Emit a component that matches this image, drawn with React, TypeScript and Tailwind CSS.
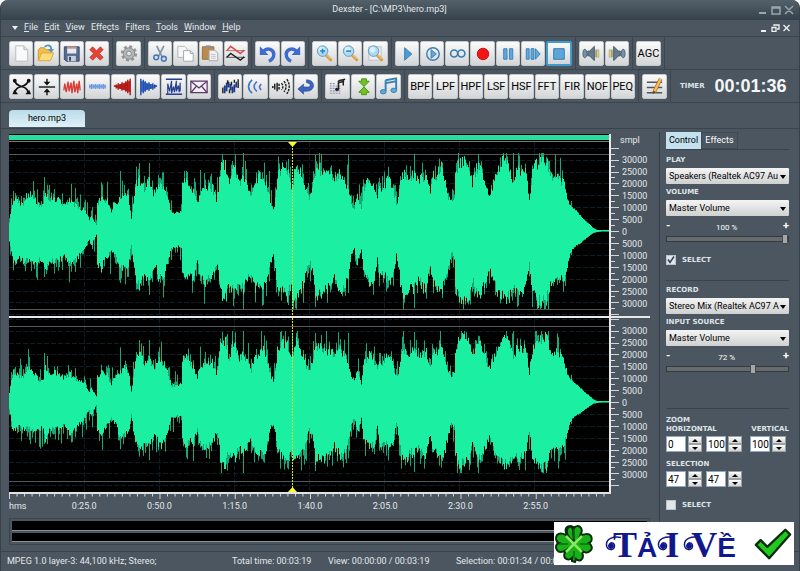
import { ReactNode } from "react";

const CAPS = "font-['DejaVu_Sans',sans-serif] text-[7px] leading-[9px] font-bold text-[#dfe4e8] uppercase";

/* x, upper level, lower level */
const ENVELOPE = [
	[0, 10, 10], [2, 24, 22], [4, 34, 34], [10, 30, 28], [14, 27, 32], [17, 38, 30], [22, 38, 33], [26, 32, 36],
	[30, 26, 31], [34, 27, 30], [36, 42, 44], [40, 33, 31], [45, 34, 32], [50, 32, 30], [55, 28, 27], [60, 32, 36],
	[65, 28, 33], [70, 24, 25], [75, 22, 20], [78, 16, 13], [80, 12, 9], [82, 17, 16], [85, 10, 8], [87, 6, 4],
	[88, 28, 34], [92, 35, 40], [95, 30, 30], [98, 32, 27], [102, 18, 20], [104, 30, 22], [107, 28, 26], [110, 34, 40],
	[115, 40, 38], [119, 36, 36], [122, 12, 14], [124, 30, 32], [127, 50, 50], [130, 54, 57], [135, 45, 46], [140, 52, 52],
	[143, 40, 42], [146, 40, 35], [149, 49, 48], [153, 45, 50], [156, 42, 42], [160, 28, 26], [162, 20, 18], [166, 19, 17],
	[171, 20, 16], [172, 20, 16], [173, 49, 42], [176, 52, 53], [180, 48, 45], [184, 40, 48], [188, 28, 30], [190, 38, 48],
	[195, 45, 54], [199, 47, 50], [203, 45, 50], [207, 32, 34], [209, 42, 40], [211, 64, 64], [216, 70, 71], [220, 50, 55],
	[223, 68, 62], [226, 64, 64], [230, 50, 52], [234, 55, 62], [238, 48, 48], [242, 38, 44], [246, 51, 60], [250, 58, 58],
	[254, 60, 61], [258, 46, 48], [261, 32, 32], [264, 24, 25], [266, 32, 36], [268, 60, 58], [274, 68, 62], [278, 64, 70],
	[282, 48, 55], [284, 54, 74], [287, 68, 66], [290, 62, 64], [294, 54, 56], [298, 38, 40], [300, 36, 33], [303, 44, 40],
	[306, 63, 66], [310, 65, 66], [315, 59, 64], [320, 60, 58], [325, 54, 50], [330, 60, 61], [335, 54, 58], [340, 42, 44],
	[342, 28, 26], [345, 25, 19], [348, 38, 34], [351, 26, 24], [352, 21, 19], [354, 45, 40], [360, 53, 53], [365, 46, 50],
	[368, 38, 26], [370, 44, 48], [375, 48, 46], [380, 56, 54], [384, 42, 48], [387, 29, 26], [389, 34, 36], [392, 55, 62],
	[396, 61, 69], [400, 52, 58], [405, 61, 60], [410, 52, 50], [414, 57, 62], [417, 56, 58], [421, 38, 38], [424, 58, 56],
	[428, 59, 58], [432, 68, 62], [436, 50, 54], [439, 34, 38], [442, 31, 23], [445, 34, 28], [446, 62, 62], [450, 71, 72],
	[455, 74, 70], [460, 67, 68], [463, 50, 50], [467, 65, 64], [471, 67, 66], [475, 56, 54], [478, 44, 46], [481, 38, 40],
	[485, 54, 56], [490, 65, 67], [495, 75, 71], [500, 69, 69], [504, 52, 60], [508, 63, 64], [513, 61, 64], [517, 60, 58],
	[520, 34, 34], [523, 60, 62], [527, 71, 73], [532, 74, 75], [537, 73, 72], [541, 60, 58], [546, 57, 54], [551, 53, 52],
	[555, 48, 48], [558, 32, 36], [561, 26, 22], [565, 22, 16], [570, 17, 13], [575, 11, 9], [580, 7, 5], [584, 3, 2],
	[588, 1, 1], [600, 1, 0],
];

const PEAKS = [
	[35, 54, 46], [111, 60, 52], [130, 68, 60], [140, 68, 64], [191, 61, 50], [213, 77, 66], [234, 78, 78], [279, 72, 74],
	[306, 76, 76], [339, 76, 62], [405, 77, 77], [497, 78, 70], [504, 78, 62], [532, 78, 77], [562, 30, 24],
];

const level = (x: number, side: number) => {
	let i = 1;
	while (i < ENVELOPE.length - 1 && ENVELOPE[i][0] < x) i++;
	const a = ENVELOPE[i - 1];
	const b = ENVELOPE[i];
	const t = (x - a[0]) / (b[0] - a[0]);
	return a[side] + (b[side] - a[side]) * t;
};

function buildWave(zero: number, gain: number, start: number) {
	let seed = start;
	const random = () => {
		seed = (seed * 16807) % 2147483647;
		return seed / 2147483647;
	};
	const side = (s: number) => {
		const body: number[] = [];
		let spikes = "";
		for (let x = 0; x < 600; x++) {
			const base = level(x, s) * gain;
			const tail = x > 556;
			const value = tail ? base * (0.94 + random() * 0.1) : base * (0.86 + random() * 0.2);
			const peak = PEAKS.find((p) => p[0] === x);
			let top = 0;
			if (peak) top = peak[s] * gain;
			else if (!tail && random() > 0.62) top = Math.min(78 * gain, value + 3 + random() * random() * 20);
			body.push(value);
			if (top > value) {
				const from = s === 1 ? zero - value : zero + value;
				const to = s === 1 ? zero - top : zero + top;
				spikes += `M${x + 0.5} ${from.toFixed(1)}V${to.toFixed(1)}`;
			}
		}
		return { body, spikes };
	};
	const up = side(1);
	const down = side(2);
	let d = `M0 ${zero}`;
	up.body.forEach((v, x) => (d += `V${(zero - v).toFixed(1)}H${x + 1}`));
	for (let x = 599; x >= 0; x--) d += `V${(zero + Math.max(down.body[x], 0.5)).toFixed(1)}H${x}`;
	return { body: d + "Z", spikes: up.spikes + down.spikes };
}

type ChannelProps = { zero: number; gain: number; seed: number; limits: number[]; first?: boolean };

function Channel({ zero, gain, seed, limits, first }: ChannelProps) {
	const wave = buildWave(zero, gain, seed);
	return (
		<svg viewBox="0 0 600 174" preserveAspectRatio="none" className="block h-[174px] w-full bg-black">
			<g stroke="#0f1d27" strokeDasharray="5 2">
				{[-7, -6, -5, -4, -3, -2, -1, 0, 1, 2, 3, 4, 5, 6, 7].map((n) => (
					<path key={n} d={`M0 ${Math.round(zero + n * 11.9)}.5H600`} />
				))}
				{[75, 150, 225, 300, 375, 450, 525].map((x) => (
					<path key={x} d={`M${x}.5 0V174`} />
				))}
			</g>
			{limits.map((y) => (
				<path key={y} d={`M0 ${y}.5H600`} stroke="#55595e" />
			))}
			<path d={wave.spikes} stroke="#18a777" />
			<path d={wave.body} fill="#1bf0a2" />
			<path d="M283.5 0V174" stroke="#d2e81c" strokeDasharray="2 1" />
			{first ? <path d="M279 0h9l-4.500 5z" fill="#ffff2a" /> : <path d="M279 174h9l-4.500-5z" fill="#ffff2a" />}
		</svg>
	);
}

const SAMPLES = [30000, 25000, 20000, 15000, 10000, 5000, 0, 5000, 10000, 15000, 20000, 25000, 30000];

function SampleTicks({ zero, top, height }: { zero: number; top: number; height: number }) {
	let d = "";
	for (let n = -14; n <= 14; n++) {
		const y = Math.round(top + zero + n * 5.95);
		if (y > top && y < height) d += `M0 ${y}.5h${n % 2 ? 4 : 8}`;
	}
	return (
		<svg width="10" height={height} className="block shrink-0 border-l-2 border-[#e8e8e8]">
			<path d={d} stroke="#d5d8da" />
		</svg>
	);
}

function Labels() {
	return (
		<>
			{SAMPLES.map((value, i) => (
				<li key={i} className="h-3">{value}</li>
			))}
		</>
	);
}

const magnifier = (
	<>
		<path d="M14 14l4.500 4.500" stroke="#d9983c" strokeWidth="3" strokeLinecap="round" />
		<path d="M14 13.500l4 4" stroke="#f6d48a" strokeLinecap="round" />
		<circle cx="10" cy="9.500" r="5.500" fill="#a9d9f3" stroke="#6b9ab6" />
		<circle cx="9" cy="8" r="3" fill="#d6f0fc" />
	</>
);

const turn = (
	<>
		<path d="M8 9.500c4-4.500 11-1.500 10.500 4 0 3-2 5-5 6.500" stroke="#3e6bd0" strokeWidth="3.500" />
		<path d="M4 4.500v9h9z" fill="#3e6bd0" />
	</>
);

const speaker = (
	<>
		<ellipse cx="5" cy="12" rx="2" ry="4.500" fill="#7791a8" stroke="#53697e" />
		<path d="M8 9.500h2l5-5v15l-5-5h-2z" fill="#66798a" stroke="#4d5e6c" />
		<path d="M16 8h4v8h-4z" fill="#8a8c80" />
		<path d="M17.500 8.500h2v7h-2z" fill="#ecd36a" />
	</>
);

const burst = (
	<path d="M3 11.500h2M5.500 10v4M7.500 8.500v7M9.500 9.500v5M11.500 7.500v9M13.500 9v6M15.500 6.500v11M17.500 5v14" strokeWidth="1.500" />
);

const ICONS: Record<string, ReactNode> = {
	New: <><path d="M6 4h8.500l4 4v12H6z" fill="#fafafa" stroke="#b9bcc0" /><path d="M14.500 4v4h4" fill="#dcdee0" stroke="#b9bcc0" /></>,
	Open: <><path d="M3.500 19V8l2-2h4l2 2h6v3" fill="#eebf4e" stroke="#d2992f" /><path d="M3.500 19.500l3.500-8h12.500l-3.500 8z" fill="#ffdc78" stroke="#dca63e" /><path d="M10 5c4-3 7-1 7 3" fill="none" stroke="#5795c4" strokeWidth="2" /><path d="M13.500 7.500h6.500l-3 3.500z" fill="#5795c4" /></>,
	Save: <><path d="M4.500 5h15.500v15H6.500l-2-2z" fill="#566b8f" stroke="#3b4d70" /><path d="M7.500 5h9.500v7H7.500z" fill="#e5ebf3" /><path d="M7.500 5h9.500v2H7.500z" fill="#d28c79" /><path d="M8 14.500h8.500v5.500H8z" fill="#c8cfda" /><path d="M9.500 15.500h2v4h-2z" fill="#33425e" /></>,
	Close: <path d="M5 8l3-3 4 4 4-4 3 3-4 4 4 4-3 3-4-4-4 4-3-3 4-4z" fill="#e64336" stroke="#bf2c22" strokeWidth=".7" />,
	Settings: <><circle cx="12.500" cy="12" r="7" stroke="#94989b" strokeWidth="3" strokeDasharray="3 2.500" /><circle cx="12.500" cy="12" r="6" fill="#b3b6b8" stroke="#85898c" /><circle cx="12.500" cy="12" r="2.500" fill="#e4e5e6" stroke="#85898c" /></>,
	Cut: <><path d="M8 4l6 12M15.500 4L10 15" stroke="#8495a3" strokeWidth="1.800" /><circle cx="7.500" cy="16" r="2.500" fill="none" stroke="#4378bd" strokeWidth="1.600" /><circle cx="15.500" cy="17.500" r="2.500" fill="none" stroke="#4378bd" strokeWidth="1.600" /></>,
	Copy: <><path d="M4 4.500h7l3 3v8.500H4z" fill="#f7f7f7" stroke="#b2b5b8" /><path d="M10 9h7l3 3v8H10z" fill="#fff" stroke="#a4a7aa" /><path d="M17 9v3h3" fill="none" stroke="#a4a7aa" /></>,
	Paste: <><path d="M3.500 5h12v13h-12z" fill="#b98b4e" stroke="#96703c" /><path d="M7 3.500h5v3H7z" fill="#8d9297" /><path d="M10.500 8.500h6l3 3v8h-9z" fill="#f1f1f1" stroke="#a4a7aa" /><path d="M12.500 13h5M12.500 15h5M12.500 17h5" stroke="#c4c6c9" /></>,
	"Invert phase": <g fill="none"><path d="M2 9h20" stroke="#c96b67" /><path d="M3 9l4-4.500 10 7.500 4-3.500" stroke="#d34b45" strokeWidth="1.500" /><path d="M2 16h20" stroke="#555" /><path d="M3 16l4-4 10 7 4-3.500" stroke="#222" strokeWidth="1.500" /></g>,
	Undo: turn,
	Redo: <g transform="matrix(-1 0 0 1 24 0)">{turn}</g>,
	"Zoom in": <>{magnifier}<path d="M7.500 9.500h5M10 7v5" stroke="#1684c8" strokeWidth="1.600" /></>,
	"Zoom out": <>{magnifier}<path d="M7.500 9.500h5" stroke="#1684c8" strokeWidth="1.600" /></>,
	"Zoom selection": <><path d="M5 5h13v14H5z" fill="#eceff1" stroke="#bcc1c5" />{magnifier}</>,
	Play: <path d="M9 6l7.500 6.500L9 19z" fill="#4d9bd1" stroke="#3781b6" />,
	"Play loop": <><circle cx="12.500" cy="12.500" r="6.500" fill="none" stroke="#3c7fb3" strokeWidth="1.500" /><path d="M10.500 8l5.500 4.500-5.500 4.500z" fill="#61a9db" stroke="#3c7fb3" /></>,
	Loop: <g fill="none" stroke="#397dae" strokeWidth="1.700"><circle cx="8.500" cy="12" r="3.700" /><circle cx="16" cy="12" r="3.700" /></g>,
	Record: <circle cx="12.500" cy="12.500" r="6" fill="#f31515" stroke="#c31313" />,
	Pause: <path d="M8 7h3.500v11H8zM14 7h3.500v11H14z" fill="#61a7da" stroke="#3d83b8" />,
	"Play from cursor": <path d="M5.500 7h3v11h-3zM10.500 7h3v11h-3zM15 7l5 5.500-5 5.500z" fill="#61a7da" stroke="#3d83b8" />,
	Stop: <path d="M7 7h11v11H7z" fill="#5ea6d8" stroke="#3179b0" />,
	"Volume down": speaker,
	"Volume up": <g transform="matrix(-1 0 0 1 24 0)">{speaker}</g>,
	"Fade cross": <><path d="M5 6c2 9 13 3 14 13M5 19c1-10 12-4 14-13" fill="none" stroke="#111" strokeWidth="1.800" /><circle cx="5" cy="6" r="2" fill="#111" /><circle cx="19.500" cy="6" r="2" fill="#111" /><path d="M2.500 20h6l-4-4.500zM22 20h-6l4-4.500z" fill="#111" /></>,
	Center: <><path d="M4 12.500h17M12.500 4v4M12.500 21v-4" stroke="#222" strokeWidth="1.600" /><path d="M9 7h7l-3.500 4zM9 18h7l-3.500-4z" fill="#111" /></>,
	Noise: <path d="M4 16l1-7 1.500 9 2-11 1 10 2-9 1 11 2-13 1 12 2-9 1 10 1.500-13 1 10" fill="none" stroke="#d93b35" strokeWidth="1.400" />,
	Flatten: <path d="M4 10v4M6 9.500v5M8 10v4M10 9.500v5M12 10v4M14 9.500v5M16 10v4M18 9.500v5M20 10v4M3.500 12h17" stroke="#6f9bdf" strokeWidth="1.600" />,
	"Fade in": <g stroke="#a91818"><path d="M3 12l17-6v12z" fill="#d52424" stroke="none" />{burst}<path d="M20 4v17" strokeWidth="1.500" /></g>,
	"Fade out": <g transform="matrix(-1 0 0 1 24 0)" stroke="#264da5"><path d="M3 12l17-6v12z" fill="#3f7de1" stroke="none" />{burst}<path d="M20 4v17" strokeWidth="1.500" /></g>,
	Normalize: <g fill="none" stroke="#263f92"><path d="M4 4.500h17M4 20h17" strokeWidth="1.500" /><path d="M6 20V9l2 8 2-11v13l2-7 1 6 2-12v11l2-6 1 7 1-10v9" strokeWidth="1.200" /></g>,
	Envelope: <g fill="none" stroke="#5d3b67" strokeWidth="1.300"><path d="M4 6.500h17v12H4z" fill="#f4eef6" /><path d="M4 6.500l8.500 7L21 6.500M4 18.500l6-7M21 18.500l-6-7" /></g>,
	Delay: <g fill="none"><path d="M6 11v8M8 8v9M10 7v6M12 9v7M14 12v7M16 10v8M18 7v6" stroke="#1d3a86" strokeWidth="1.800" /><path d="M4 13v6M9 5.500v4M13 7v4M16 5v3M20 4.500v9M11 15v4" stroke="#222" strokeWidth="1.500" /></g>,
	Echo: <g fill="none" stroke="#4775ca" strokeWidth="1.700"><path d="M8.500 5C3.500 9 3.500 15 8.500 19M13.500 7C9.500 10 9.500 14 13.500 17M18 9.500c-2.500 2-2.500 4 0 6" /></g>,
	Reverb: <g fill="none" stroke="#1d1d1d" strokeWidth="1.500"><path d="M6 9v6M8.500 8v9M4 11.500v2" /><path d="M10.500 9v7M13 8.500c2 2 2 5 0 7M15.500 6.500c3 3 3 8 0 11M18.500 4.500c3.500 4 3.500 11 0 15" strokeDasharray="2.500 1" /></g>,
	Reverse: <path d="M4 14.500l6-5v3h4c4 0 4-4-1-4.500V5c10 0 10 12 0 12h-3v3z" fill="#3b62bd" stroke="#2a4995" strokeWidth=".6" />,
	Tempo: <><path d="M4 9h5M4 11.500h11M4 14h11M4 16.500h11M4 19h11" stroke="#8b93b1" strokeWidth="1.200" strokeDasharray="2 1" /><path d="M13 6v9M13 6l7-1.500M18 5v6M13 8l6-1.500" stroke="#222" strokeWidth="1.600" /><ellipse cx="11.500" cy="15" rx="2" ry="1.600" fill="#222" /></>,
	Stretch: <><path d="M10 4h5v2.500h3L12.500 12 7 6.500h3zM10 20.500h5V18h3l-5.500-5.500L7 18h3z" fill="#70c522" stroke="#489014" /></>,
	Pitch: <><path d="M9 5.500l11-2v12M9 17V5.500M9 8.500l11-2" fill="none" stroke="#3a81b3" strokeWidth="2" /><ellipse cx="6.500" cy="17.500" rx="3" ry="2.300" fill="#62a8d6" stroke="#3a81b3" /><ellipse cx="17.500" cy="16" rx="3" ry="2.300" fill="#62a8d6" stroke="#3a81b3" /></>,
	Edit: <><path d="M4 7.500h16M4 13h16M4 18.500h16" stroke="#53575b" strokeWidth="1.500" /><path d="M18.500 4l-7 14" stroke="#ac742a" strokeWidth="4" /><path d="M18.500 4l-6.500 13" stroke="#f8bd55" strokeWidth="2.500" /><path d="M11 16.500l-1 3.500 3-2z" fill="#444" /></>,
};

const TOP_TOOLS = [
	{ width: "w-[100px]", items: ["New", "Open", "Save", "Close"] },
	{ width: "w-[25px]", items: ["Settings"] },
	{ width: "w-[100px]", items: ["Cut", "Copy", "Paste", "Invert phase"] },
	{ width: "w-[50px]", items: ["Undo", "Redo"] },
	{ width: "w-[76px]", items: ["Zoom in", "Zoom out", "Zoom selection"] },
	{ width: "w-[177px]", items: ["Play", "Play loop", "Loop", "Record", "Pause", "Play from cursor", "Stop"] },
	{ width: "w-[50px]", items: ["Volume down", "Volume up"] },
	{ width: "w-[25px]", items: ["AGC"] },
];

const BOTTOM_TOOLS = [
	{ width: "w-[202px]", items: ["Fade cross", "Center", "Noise", "Flatten", "Fade in", "Fade out", "Normalize", "Envelope"] },
	{ width: "w-[100px]", items: ["Delay", "Echo", "Reverb", "Reverse"] },
	{ width: "w-[76px]", items: ["Tempo", "Stretch", "Pitch"] },
	{ width: "w-[227px]", items: ["BPF", "LPF", "HPF", "LSF", "HSF", "FFT", "FIR", "NOF", "PEQ"] },
	{ width: "w-[25px]", items: ["Edit"] },
];

function ToolGroups({ groups }: { groups: typeof TOP_TOOLS }) {
	return (
		<>
			{groups.map((group) => (
				<div key={group.items[0]} className="mr-[3px] flex h-full items-center border-r border-[#3d4750] pr-[3px]">
					<div className={`flex gap-px ${group.width}`}>
						{group.items.map((item) => (
							<button
								key={item}
								aria-label={item}
								className={`flex h-[25px] min-w-0 flex-1 items-center justify-center rounded-[2px] border bg-linear-to-b from-[#fbfbfb] to-[#d3d5d7] text-[11px] leading-none text-black ${item === "Stop" ? "border-2 border-[#3f9bd0]" : "border-[#c5c8ca]"}`}
							>
								{ICONS[item] ? (
									<svg viewBox="0 0 24 24" fill="none" className="size-[23px] shrink-0">{ICONS[item]}</svg>
								) : (
									item
								)}
							</button>
						))}
					</div>
				</div>
			))}
		</>
	);
}

const MENU = [
	["", "F", "ile"], ["", "E", "dit"], ["", "V", "iew"], ["Effe", "c", "ts"],
	["F", "i", "lters"], ["", "T", "ools"], ["", "W", "indow"], ["", "H", "elp"],
];

function Dropdown({ id, label, value }: { id: string; label: string; value: string }) {
	return (
		<div>
			<label htmlFor={id} className={`block ${CAPS}`}>{label}</label>
			<div className="relative mt-[3px]">
				<select
					id={id}
					className="block h-4 w-full appearance-none overflow-hidden rounded-[1px] bg-linear-to-b from-[#f4f4f4] to-[#cfd1d1] pr-[10px] pl-[3px] text-[9px] leading-4 text-black"
				>
					<option>{value}</option>
				</select>
				<svg viewBox="0 0 6 4" className="pointer-events-none absolute top-[7px] right-[3px] h-1 w-1.5">
					<path d="M0 0h6L3 4z" />
				</svg>
			</div>
		</div>
	);
}

function Level({ label, value }: { label: string; value: number }) {
	return (
		<div className="mt-1">
			<div className="flex h-3 justify-between text-[8px] leading-4 text-white">
				<span className="text-[11px] leading-3 font-bold">-</span>
				<span>{value} %</span>
				<span className="text-[11px] leading-3 font-bold">+</span>
			</div>
			<input
				type="range"
				aria-label={label}
				defaultValue={value}
				className="mt-[2px] block h-[10px] w-full appearance-none bg-transparent [&::-webkit-slider-runnable-track]:h-[6px] [&::-webkit-slider-runnable-track]:border [&::-webkit-slider-runnable-track]:border-[#343a3f] [&::-webkit-slider-runnable-track]:bg-[#666b6e] [&::-webkit-slider-thumb]:-mt-[3px] [&::-webkit-slider-thumb]:h-[10px] [&::-webkit-slider-thumb]:w-[6px] [&::-webkit-slider-thumb]:appearance-none [&::-webkit-slider-thumb]:rounded-[1px] [&::-webkit-slider-thumb]:border [&::-webkit-slider-thumb]:border-[#45494c] [&::-webkit-slider-thumb]:bg-[#a5a6a6]"
			/>
		</div>
	);
}

function Tick({ checked }: { checked?: boolean }) {
	return (
		<label className={`flex items-center gap-[6px] ${CAPS}`}>
			<span className="relative block size-[10px]">
				<input
					type="checkbox"
					defaultChecked={checked}
					className="peer block size-[10px] appearance-none border border-[#b9c4cf] bg-[#e2e5e7]"
				/>
				<svg viewBox="0 0 10 10" className="pointer-events-none absolute inset-0 hidden size-[10px] peer-checked:block">
					<path d="M2 4.500l2 3 4-6" fill="none" stroke="#2f3f60" strokeWidth="1.500" />
				</svg>
			</span>
			Select
		</label>
	);
}

function Spinner({ label, value }: { label: string; value: string }) {
	return (
		<div className="flex gap-[2px]">
			<input
				aria-label={label}
				defaultValue={value}
				className="h-4 w-[20px] border border-[#8ea9c4] bg-white pl-px text-[10px] text-black"
			/>
			<div className="flex w-[14px] flex-col">
				{["M0 3h6L3 0z", "M0 0h6L3 3z"].map((d, i) => (
					<button
						key={d}
						aria-label={`${label} ${i ? "down" : "up"}`}
						className="flex h-2 items-center justify-center border border-[#9da1a4] bg-linear-to-b from-[#fdfdfd] to-[#d0d2d3]"
					>
						<svg viewBox="0 0 6 3" className="h-[3px] w-1.5"><path d={d} /></svg>
					</button>
				))}
			</div>
		</div>
	);
}

function SidePanel() {
	return (
		<aside className="mt-[3px] w-[140px] shrink-0 border-l border-[#363f47] pl-[6px]">
			<div className="flex h-[17px] text-[9px] leading-[15px]">
				<button className="w-[35px] bg-[#c3e1ef] text-black">Control</button>
				<button className="w-[37px] border border-[#404a53] text-white">Effects</button>
			</div>
			<div className="mr-[10px]">
				<section className="h-[131px] border-t border-[#39434b] pt-[6px]">
					<Dropdown id="play" label="Play" value="Speakers (Realtek AC97 Au" />
					<div className="mt-1">
						<Dropdown id="volume" label="Volume" value="Master Volume" />
					</div>
					<Level label="Play volume" value={100} />
					<div className="mt-[11px]"><Tick checked /></div>
				</section>
				<section className="h-[128px] border-t border-[#39434b] pt-[5px]">
					<Dropdown id="record" label="Record" value="Stereo Mix (Realtek AC97 A" />
					<div className="mt-1">
						<Dropdown id="source" label="Input source" value="Master Volume" />
					</div>
					<Level label="Input volume" value={72} />
				</section>
				<section className="border-t border-[#39434b] pt-[7px]">
					<h2 className={CAPS}>Zoom</h2>
					<div className={`flex justify-between ${CAPS}`}>
						<h3>Horizontal</h3>
						<h3>Vertical</h3>
					</div>
					<div className="mt-0.5 flex gap-1">
						<Spinner label="Horizontal from" value="0" />
						<Spinner label="Horizontal to" value="100" />
						<div className="ml-1"><Spinner label="Vertical" value="100" /></div>
					</div>
					<h2 className={`mt-2 ${CAPS}`}>Selection</h2>
					<div className="mt-[2px] flex gap-1">
						<Spinner label="Selection from" value="47" />
						<Spinner label="Selection to" value="47" />
					</div>
					<div className="mt-[13px]"><Tick /></div>
				</section>
			</div>
		</aside>
	);
}

const TIMES = ["0:25.0", "0:50.0", "1:15.0", "1:40.0", "2:05.0", "2:30.0", "2:55.0"];

function Ruler() {
	let d = "";
	for (let i = 0; i <= 80; i++) d += `M${i * 7.5 + 0.5} 0v${i % 10 ? 3 : 6}`;
	return (
		<>
			<svg viewBox="0 0 600 6" preserveAspectRatio="none" className="block h-[7px] w-full border-t-2 border-[#e0e2e3]">
				<path d={d} stroke="#d3d6d8" />
			</svg>
			<div className="grid grid-cols-16 text-center text-[9px] leading-[14px]">
				<span className="text-left">hms</span>
				{TIMES.map((time) => (
					<span key={time} className="col-span-2">{time}</span>
				))}
			</div>
		</>
	);
}

function Swash() {
	return (
		<svg viewBox="0 0 16 18" className="mt-[11px] -mr-2 h-[18px] w-4 shrink-0 self-start" fill="none" stroke="#10188b">
			<path d="M16 1.500C8 0 1 3 1.500 9c.5 6 8 6 8 1 0-4-5-4-5-1" strokeWidth="1.500" />
			<circle cx="6" cy="10" r="2.500" fill="#10188b" />
		</svg>
	);
}

function DownloadBanner() {
	return (
		<a href="#download" className="absolute right-[5px] bottom-[6px] flex h-[43px] w-[240px] items-center bg-white text-[#10188b]">
			<svg viewBox="0 0 40 40" className="size-[40px] shrink-0">
				<path
					d="M20 18C14 14 11 8 14 4c2-3 5-2 6 0 1-2 5-3 7 0 2 3 0 6-1 8 3-2 9-3 11 0 2 4 0 6-2 7 3 2 4 6 1 8-3 3-7 1-9-1 2 3 3 8 0 10-2 1-4 0-5-1l-1 3-3-1v-3c-2 2-5 2-7 0-2-3 0-6 1-8-3 2-7 3-9 0-2-3-1-6 2-7-3-1-4-5-2-8 3-3 8-1 10 1-1-3-3-7 0-9 3-2 6 1 6 3z"
					fill="#18af19" stroke="#082b0a" strokeWidth="2"
				/>
				<path d="M12 12l16 16M28 12L12 28" stroke="#88e85d" strokeWidth="2.500" />
				<path d="M20 5v10M5 20h9M26 20h9M20 27v8" stroke="#0b6f11" strokeWidth="1.500" />
			</svg>
			<span className="ml-[11px] flex items-baseline pt-[6px] font-['Liberation_Serif',serif] text-[36px] leading-[40px] font-bold">
				<Swash />T
				<span className="font-['Liberation_Sans',sans-serif] text-[28px]">Ả</span>
				<Swash />I
				<span className="w-1" />
				<Swash />V
				<span className="font-['Liberation_Sans',sans-serif] text-[28px]">Ề</span>
			</span>
			<svg viewBox="0 0 40 34" className="mr-[2px] ml-auto h-[34px] w-[38px] shrink-0">
				<path d="M2 18l5-5 7 7L33 2l5 5-22 25z" fill="#21c91e" stroke="#0c2c0e" strokeWidth="2.500" strokeLinejoin="round" />
			</svg>
		</a>
	);
}

export default function App() {
	return (
		<div className="bg-white">
			<div className="relative flex min-h-screen flex-col rounded-t-lg border-x border-[#36414a] bg-[#4b5660] font-[Roboto,sans-serif] text-[#e4e8eb]">
				<header className="grid h-[20px] grid-cols-[1fr_auto_1fr] items-center rounded-t-lg bg-linear-to-b from-[#53606a] to-[#36424b] pr-[5px] text-[9px]">
					<span />
					<h1 className="pr-4">Dexster - [C:\MP3\hero.mp3]</h1>
					<svg viewBox="0 0 36 10" className="h-[10px] w-9 justify-self-end" fill="none" stroke="#9ba5ad">
						<path d="M1 8h7" strokeWidth="2" />
						<path d="M14 2h8v7h-8zM14 3h8M27 1l8 8M35 1l-8 8" strokeWidth="1.500" />
					</svg>
				</header>

				<nav className="flex h-[17px] items-center gap-[6px] border-b border-[#3a444d] pl-[11px] text-[9px]">
					<svg viewBox="0 0 6 4" className="h-1 w-1.5" fill="#eef1f3"><path d="M0 0h6L3 4z" /></svg>
					{MENU.map(([before, key, after]) => (
						<a key={after} href={`#${after}`}>{before}<u>{key}</u>{after}</a>
					))}
					<svg viewBox="0 0 30 8" className="mr-[9px] ml-auto h-2 w-[30px]" fill="none" stroke="#eef1f3">
						<path d="M1 7h5" strokeWidth="2" />
						<path d="M14 2V1h5v4h-2M12 3.500h4v4h-4zM23.500 1l6 6M29.500 1l-6 6" strokeWidth="1.300" />
					</svg>
				</nav>

				<div className="flex h-[33px] items-center border-b border-[#3a444d] pl-2">
					<ToolGroups groups={TOP_TOOLS} />
				</div>
				<div className="flex h-[33px] items-center border-b border-[#3a444d] pl-2">
					<ToolGroups groups={BOTTOM_TOOLS} />
					<span className={`ml-[6px] ${CAPS}`}>Timer</span>
					<output className="ml-[10px] font-['Liberation_Sans',sans-serif] text-[18px] font-bold text-[#f4f6f8]">00:01:36</output>
				</div>

				<div className="flex h-[26px] items-end border-b border-[#3a444d] pl-2">
					<button className="mb-px h-[17px] w-[76px] rounded-t-sm bg-linear-to-b from-[#b9dcea] to-[#e0f1f8] text-[9px] text-black">
						hero.mp3
					</button>
				</div>

				<div className="flex flex-1">
					<main className="min-w-0 flex-1 pt-[5px] pr-[9px] pl-2">
						<div className="flex">
							<div className="min-w-0 flex-1">
								<div className="h-[7px] border-y border-black bg-[#2bdca0]" />
								<div className="h-px bg-[#6f767c]" />
								<Channel zero={89} gain={1} seed={4217} limits={[12, 167]} first />
							</div>
							<SampleTicks zero={89} top={8} height={182} />
							<ul className="w-[31px] pl-[3px] text-[9px] leading-3">
								<li className="mb-[8px] -ml-0.5 h-3">smpl</li>
								<Labels />
							</ul>
						</div>
						<div className="h-[2px] bg-[#e8e8e8]" />
						<div className="flex">
							<div className="min-w-0 flex-1">
								<Channel zero={84} gain={0.91} seed={90313} limits={[8, 163]} />
							</div>
							<SampleTicks zero={84} top={0} height={174} />
							<ul className="w-[31px] pt-[7px] pl-[3px] text-[9px] leading-3">
								<Labels />
							</ul>
						</div>
						<div className="mr-[39px]">
							<Ruler />
						</div>
						<div className="mt-[5px] flex h-[27px] flex-col gap-[2px] border border-[#3a444c] px-0.5 py-[2px]">
							<div className="flex-1 border-b border-[#8a9197] bg-black" />
							<div className="flex-1 border-b border-[#8a9197] bg-black" />
						</div>
					</main>
					<SidePanel />
				</div>

				<footer className="flex h-[20px] items-center border-t border-[#39434b] pl-[6px] text-[9px]">
					<span className="w-[225px]">MPEG 1.0 layer-3: 44,100 kHz; Stereo;</span>
					<span className="w-24">Total time: 00:03:19</span>
					<span className="w-32">View: 00:00:00 / 00:03:19</span>
					<span>Selection: 00:01:34 / 00:0</span>
				</footer>
				<DownloadBanner />
			</div>
		</div>
	);
}
